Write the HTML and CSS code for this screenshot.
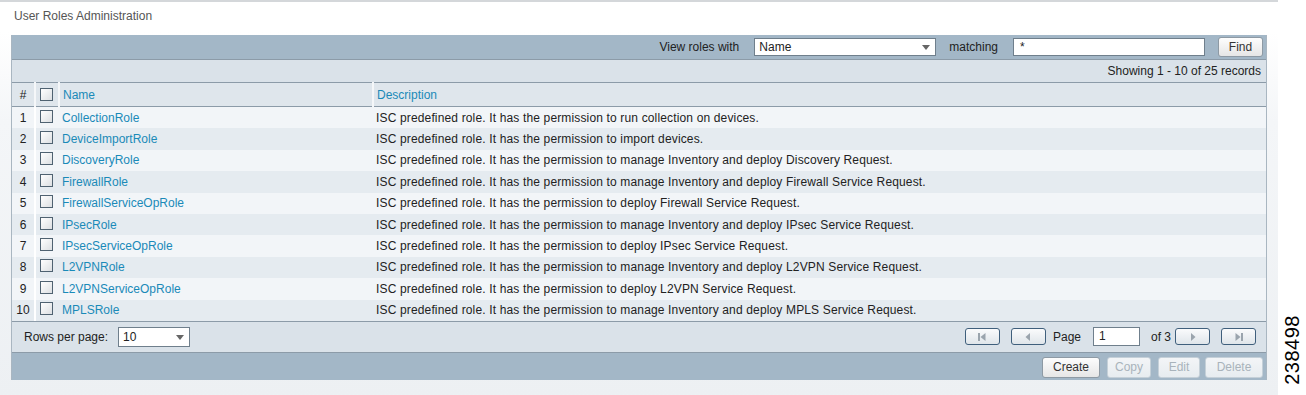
FILE: index.html
```html
<!DOCTYPE html>
<html lang="en">
<head>
  <meta charset="utf-8">
  <title>User Roles Administration</title>
  <link rel="stylesheet" href="styles.css">
</head>
<body>
  <div class="page">
    <div class="main">
      <div class="title">User Roles Administration</div>

      <div class="panel">
        <!-- Filter-Leiste -->
        <div class="toolbar">
          <span class="lbl">View roles with</span>
          <div class="select wide"><span>Name</span><i class="caret"></i></div>
          <span class="lbl">matching</span>
          <div class="textbox search">*</div>
          <button class="btn find">Find</button>
        </div>

        <div class="info">Showing 1 - 10 of 25 records</div>

        <table class="grid">
          <thead>
            <tr>
              <th class="num">#</th>
              <th class="chk"><span class="box"></span></th>
              <th class="name">Name</th>
              <th class="desc">Description</th>
            </tr>
          </thead>
          <tbody>
            <tr><td class="num">1</td><td class="chk"><span class="box"></span></td><td><a href="#">CollectionRole</a></td><td class="d">ISC predefined role. It has the permission to run collection on devices.</td></tr>
            <tr><td class="num">2</td><td class="chk"><span class="box"></span></td><td><a href="#">DeviceImportRole</a></td><td class="d">ISC predefined role. It has the permission to import devices.</td></tr>
            <tr><td class="num">3</td><td class="chk"><span class="box"></span></td><td><a href="#">DiscoveryRole</a></td><td class="d">ISC predefined role. It has the permission to manage Inventory and deploy Discovery Request.</td></tr>
            <tr><td class="num">4</td><td class="chk"><span class="box"></span></td><td><a href="#">FirewallRole</a></td><td class="d">ISC predefined role. It has the permission to manage Inventory and deploy Firewall Service Request.</td></tr>
            <tr><td class="num">5</td><td class="chk"><span class="box"></span></td><td><a href="#">FirewallServiceOpRole</a></td><td class="d">ISC predefined role. It has the permission to deploy Firewall Service Request.</td></tr>
            <tr><td class="num">6</td><td class="chk"><span class="box"></span></td><td><a href="#">IPsecRole</a></td><td class="d">ISC predefined role. It has the permission to manage Inventory and deploy IPsec Service Request.</td></tr>
            <tr><td class="num">7</td><td class="chk"><span class="box"></span></td><td><a href="#">IPsecServiceOpRole</a></td><td class="d">ISC predefined role. It has the permission to deploy IPsec Service Request.</td></tr>
            <tr><td class="num">8</td><td class="chk"><span class="box"></span></td><td><a href="#">L2VPNRole</a></td><td class="d">ISC predefined role. It has the permission to manage Inventory and deploy L2VPN Service Request.</td></tr>
            <tr><td class="num">9</td><td class="chk"><span class="box"></span></td><td><a href="#">L2VPNServiceOpRole</a></td><td class="d">ISC predefined role. It has the permission to deploy L2VPN Service Request.</td></tr>
            <tr><td class="num">10</td><td class="chk"><span class="box"></span></td><td><a href="#">MPLSRole</a></td><td class="d">ISC predefined role. It has the permission to manage Inventory and deploy MPLS Service Request.</td></tr>
          </tbody>
        </table>

        <!-- Blättern -->
        <div class="pager">
          <div class="rows">
            <span>Rows per page:</span>
            <div class="select small"><span>10</span><i class="caret"></i></div>
          </div>
          <div class="nav">
            <button class="pbtn first">
              <svg width="10" height="10" viewBox="0 0 10 10"><rect x="1" y="1" width="2" height="8" fill="#9aa4ad"/><path d="M8.5 1 L3.5 5 L8.5 9 Z" fill="#9aa4ad"/></svg>
            </button>
            <button class="pbtn prev">
              <svg width="10" height="10" viewBox="0 0 10 10"><path d="M7 1 L2.5 5 L7 9 Z" fill="#9aa4ad"/></svg>
            </button>
            <span class="pg">Page</span>
            <div class="textbox pageno">1</div>
            <span class="of">of 3</span>
            <button class="pbtn next">
              <svg width="10" height="10" viewBox="0 0 10 10"><path d="M3 1 L7.5 5 L3 9 Z" fill="#9aa4ad"/></svg>
            </button>
            <button class="pbtn last">
              <svg width="10" height="10" viewBox="0 0 10 10"><path d="M1.5 1 L6.5 5 L1.5 9 Z" fill="#9aa4ad"/><rect x="7" y="1" width="2" height="8" fill="#9aa4ad"/></svg>
            </button>
          </div>
        </div>

        <div class="actions">
          <button class="btn act create">Create</button>
          <button class="btn act off copy">Copy</button>
          <button class="btn act off edit">Edit</button>
          <button class="btn act off del">Delete</button>
        </div>
      </div>
    </div>
    <div class="side">
      <span class="figno">238498</span>
    </div>
  </div>
</body>
</html>
```

FILE: styles.css
```css
/* Rollenverwaltung – alter Cisco-Stil */
body {
  margin: 0;
  padding: 0;
  font-family: "Liberation Sans", Arial, sans-serif;
  font-size: 12px;
  color: #222;
  background: #fff;
}
.page {
  display: flex;
  width: 1306px;
  height: 395px;
}
.main {
  width: 1278px;
  background: linear-gradient(#fff 0, #fff 30px, #f4f6f8 120px, #edf0f3 395px);
  border-top: 2px solid #d4d7da;
  box-sizing: border-box;
}
.title {
  height: 33px;
  padding: 7px 0 0 14px;
  box-sizing: border-box;
  color: #555;
  font-size: 12px;
}
.panel {
  margin-left: 11px;
  width: 1256px;
  border-left: 1px solid #a9b6c1;
  border-right: 1px solid #a9b6c1;
  box-sizing: border-box;
}

/* obere Leiste */
.toolbar {
  height: 24px;
  background: #a3b7c7;
  display: flex;
  align-items: center;
  justify-content: flex-end;
  padding-right: 3px;
}
.lbl {
  color: #222;
}
.toolbar .lbl:first-child {
  margin-right: 15px;
}
.toolbar .wide {
  margin-right: 13px;
}
.toolbar .search {
  margin-left: 15px;
  margin-right: 13px;
}
.select {
  height: 18px;
  background: #fff;
  border: 1px solid #6f7f8c;
  box-sizing: border-box;
  display: flex;
  align-items: center;
  padding-left: 4px;
  position: relative;
}
.select.wide { width: 182px; }
.select.small { width: 72px; height: 20px; }
.caret {
  position: absolute;
  right: 5px;
  top: 50%;
  margin-top: -2px;
  width: 0;
  height: 0;
  border-left: 4px solid transparent;
  border-right: 4px solid transparent;
  border-top: 5px solid #666;
}
.textbox {
  height: 18px;
  background: #fff;
  border: 1px solid #6f7f8c;
  box-sizing: border-box;
  padding: 1px 0 0 6px;
}
.textbox.search { width: 192px; }
.textbox.pageno { width: 47px; height: 19px; padding-left: 5px; }

.btn {
  font-family: "Liberation Sans", Arial, sans-serif;
  font-size: 12px;
  color: #333;
  background: linear-gradient(#fdfdfd, #e6e6e6);
  border: 1px solid #8e9aa4;
  border-radius: 3px;
  padding: 0;
  height: 20px;
}
.btn.find { width: 45px; }

.info {
  height: 23px;
  background: #dae2e9;
  border-top: 1px solid #8c9ba8;
  text-align: right;
  padding: 4px 5px 0 0;
  box-sizing: border-box;
}

/* Tabelle */
.grid {
  width: 100%;
  border-collapse: collapse;
  table-layout: fixed;
}
.grid th {
  height: 24px;
  background: #dfe6ec;
  border-top: 1px solid #8c9ba8;
  border-bottom: 1px solid #8c9ba8;
  border-left: 2px solid #f5f7f9;
  text-align: left;
  font-weight: normal;
  color: #1a8ab8;
  padding: 0 3px;
  box-sizing: border-box;
}
.grid th:first-child { border-left: none; }
.grid th.num { color: #222; text-align: center; }
.grid .num { width: 23px; }
.grid .chk { width: 24px; }
.grid .name { width: 314px; }
.grid td {
  height: 21.4px;
  padding: 0 3px;
  white-space: nowrap;
  overflow: hidden;
}
.grid td.d { letter-spacing: 0.15px; }
.grid td.num {
  text-align: center;
  padding: 0;
  border-right: 2px solid #fff;
}
.grid tbody tr:nth-child(odd) { background: #f2f5f8; }
.grid tbody tr:nth-child(even) { background: #e5ebf0; }
.grid td.chk, .grid th.chk { padding: 0 0 0 4px; }
.grid a {
  color: #1a8ab8;
  text-decoration: none;
}
.box {
  display: block;
  width: 13px;
  height: 13px;
  border: 1px solid #4f6271;
  box-sizing: border-box;
  background: linear-gradient(135deg, #fff, #dcdfe2);
  margin-top: -3px;
}
.grid th .box { margin-top: 0; }

/* Fußzeile */
.pager {
  height: 32px;
  background: #dae2e9;
  border-top: 1px solid #8c9ba8;
  border-bottom: 1px solid #8c9ba8;
  box-sizing: border-box;
  display: flex;
  align-items: center;
  justify-content: space-between;
  padding: 0 10px 0 12px;
}
.rows {
  display: flex;
  align-items: center;
  gap: 10px;
}
.nav {
  display: flex;
  align-items: center;
}
.pbtn {
  width: 35px;
  height: 17px;
  border: 1px solid #3f5f7c;
  border-radius: 3px;
  background: linear-gradient(#fafbfc, #dfe5ea);
  padding: 0;
  display: flex;
  align-items: center;
  justify-content: center;
}
.pbtn.first { margin-right: 11px; }
.pbtn.prev { margin-right: 7px; }
.pg { margin-right: 12px; }
.of { margin: 0 4px 0 11px; }
.pbtn.next { margin-right: 11px; }

.actions {
  height: 27px;
  background: #a3b7c7;
  display: flex;
  align-items: center;
  justify-content: flex-end;
  padding-right: 3px;
  gap: 7px;
}
.btn.act { height: 21px; margin-top: 2px; }
.btn.create { width: 58px; }
.btn.copy { width: 44px; }
.btn.edit { width: 42px; }
.btn.del { width: 58px; margin-left: -2px; }
.btn.off {
  color: #a9b3bb;
  border-color: #c5d0d8;
  background: linear-gradient(#f3f5f7, #e7ecf0);
}

/* Abbildungsnummer */
.side {
  width: 28px;
  background: #fff;
  display: flex;
  align-items: flex-end;
  justify-content: center;
  padding-bottom: 10px;
  box-sizing: border-box;
}
.figno {
  writing-mode: vertical-rl;
  transform: rotate(180deg);
  font-size: 20px;
  color: #000;
  letter-spacing: 0.5px;
}
```
